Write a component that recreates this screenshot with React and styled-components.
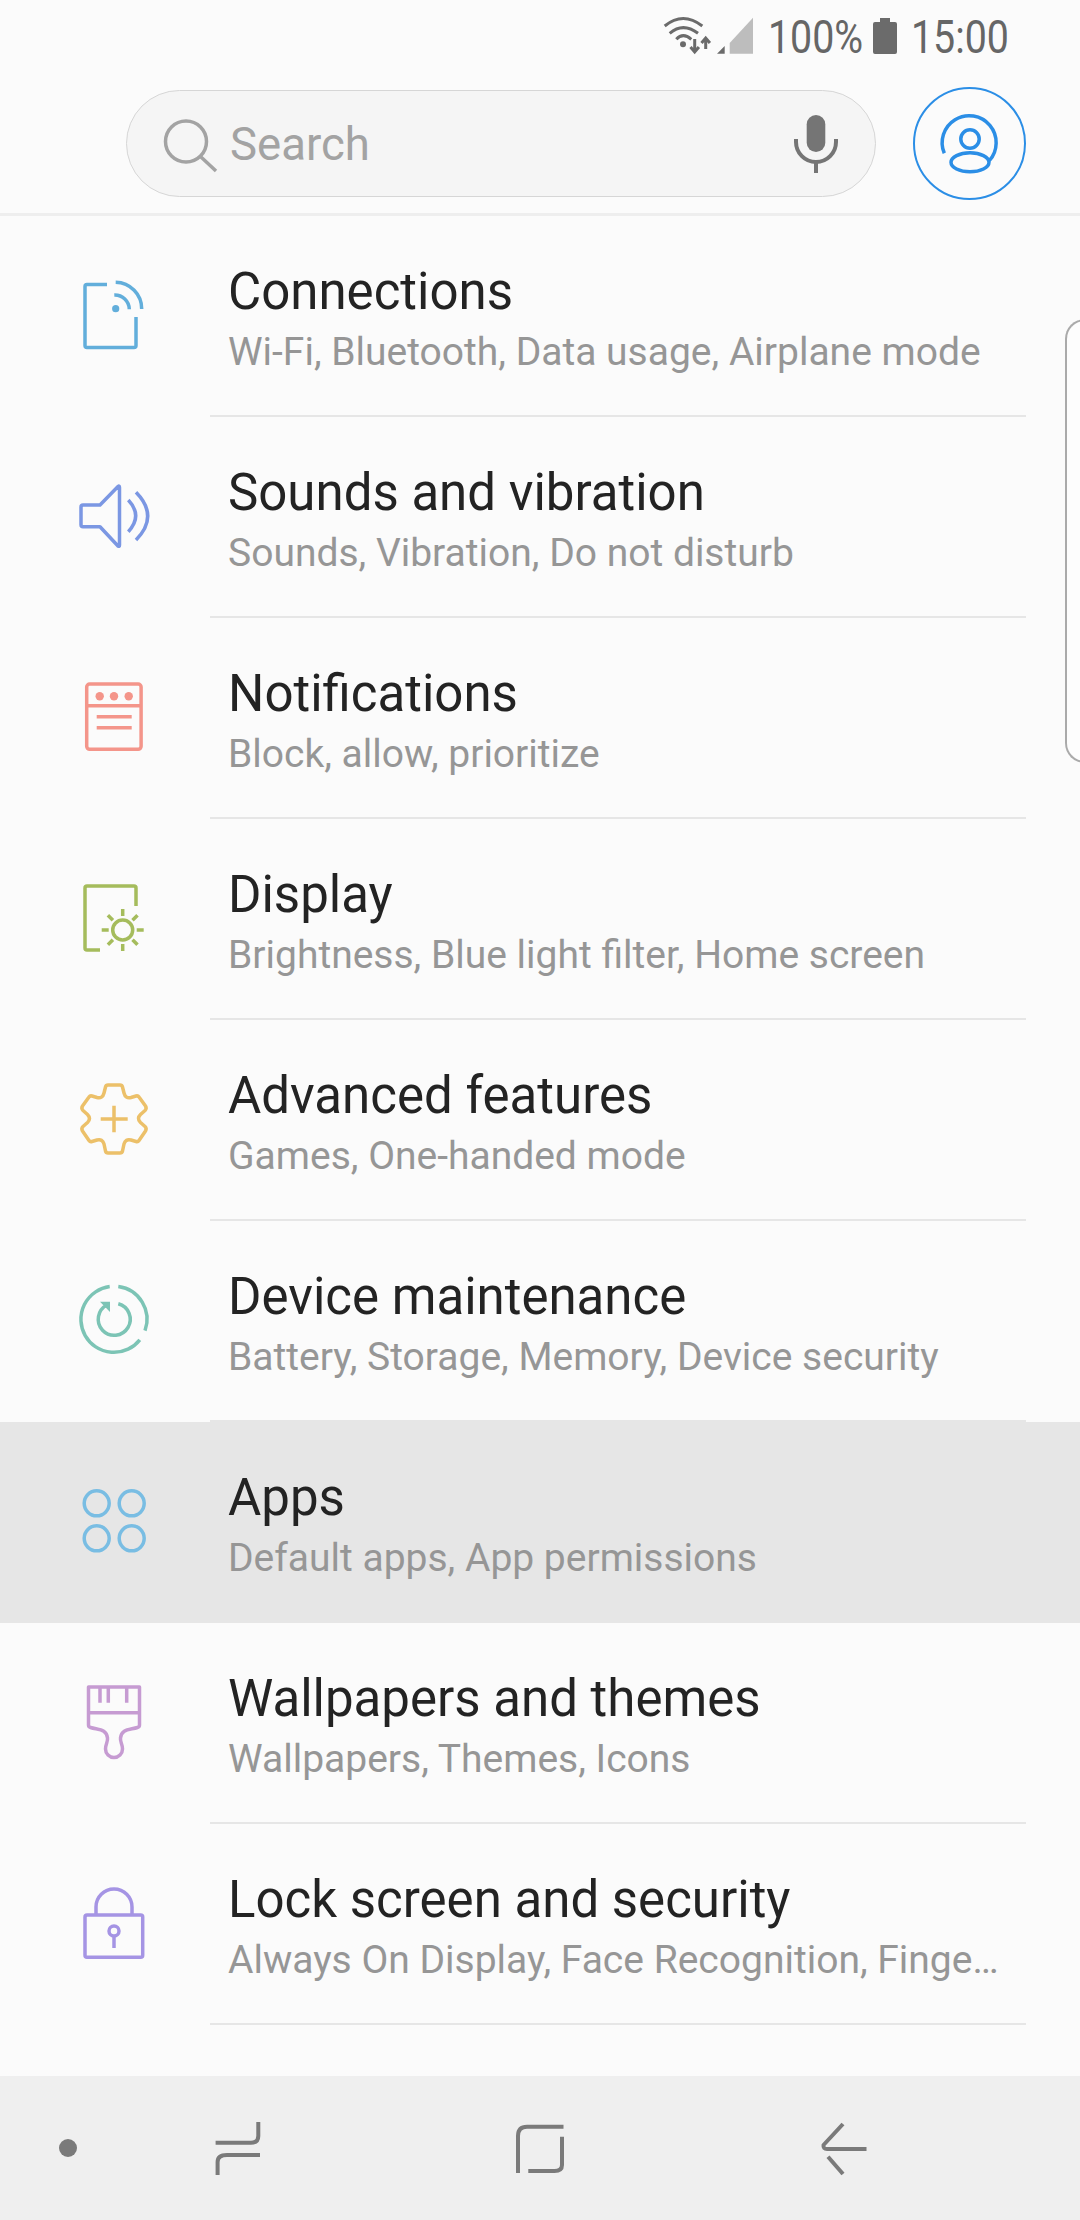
import styled, { createGlobalStyle } from 'styled-components';

const GlobalStyle = createGlobalStyle`
  html, body { margin: 0; padding: 0; background: #fbfbfb; }
  body { font-family: Roboto, "Liberation Sans", sans-serif; }
  * { box-sizing: border-box; }
`;

const Screen = styled.div`
  position: relative;
  width: 1080px;
  height: 2220px;
  display: flex;
  flex-direction: column;
  background: #fbfbfb;
  overflow: hidden;
`;
const Header = styled.header`
  height: 216px;
  border-bottom: 3px solid #eeeeee;
`;
const StatusBar = styled.div`
  height: 87px;
  padding: 0 73px 15px 0;
  display: flex;
  justify-content: flex-end;
  align-items: center;
  color: #666666;
`;
const StatusText = styled.span`
  display: inline-block;
  width: ${(p) => p.$width}px;
  margin-left: ${(p) => p.$left}px;
  padding-top: 2px;
  font-size: 46px;
  line-height: 50px;
  white-space: nowrap;
  transform: scaleX(0.855);
  transform-origin: left center;
`;
const BatteryIcon = styled.svg`
  margin-left: 13px;
  display: block;
`;
const SearchRow = styled.div`
  display: flex;
  align-items: center;
  gap: 37px;
  height: 113px;
  padding-left: 126px;
`;
const SearchPill = styled.div`
  width: 750px;
  height: 107px;
  display: flex;
  align-items: center;
  padding: 0 34px 0 31px;
  background: #f5f5f5;
  border: 1.5px solid #d6d6d6;
  border-radius: 54px;
`;
const Placeholder = styled.span`
  flex: 1;
  margin-left: 12px;
  padding-top: 1px;
  font-size: 45.5px;
  color: #a3a3a3;
`;
const ProfileButton = styled.div`
  width: 113px;
  height: 113px;
  display: flex;
  align-items: center;
  justify-content: center;
  border: 2px solid #2b8ee6;
  border-radius: 50%;
`;
const List = styled.main`
  flex: 1;
`;
const Row = styled.div`
  position: relative;
  height: 201px;
  display: flex;
  padding-left: 74px;
  background: ${(p) => (p.$active ? '#e6e6e6' : 'transparent')};
  &::after {
    content: '';
    position: absolute;
    left: 210px;
    right: 54px;
    bottom: 0;
    height: 2px;
    background: #e6e6e6;
  }
`;
const IconSlot = styled.svg`
  flex: none;
  margin-top: 59px;
  fill: none;
  stroke: ${(p) => p.$color};
  stroke-width: 3.5;
  stroke-linecap: butt;
  stroke-linejoin: round;
  circle.dot { fill: ${(p) => p.$color}; stroke: none; }
  polygon { fill: ${(p) => p.$color}; stroke: none; }
`;
const RowText = styled.div`
  min-width: 0;
  margin-left: 74px;
  padding-top: 48px;
`;
const Title = styled.div`
  font-size: 51px;
  line-height: 56px;
  color: #232323;
`;
const Subtitle = styled.div`
  margin-top: 10px;
  font-size: 39px;
  line-height: 44px;
  color: #969696;
  white-space: nowrap;
`;
const EdgeHandle = styled.div`
  position: absolute;
  top: 319px;
  left: 1065px;
  width: 20px;
  height: 444px;
  border: 2px solid #aaaaaa;
  border-right: none;
  border-radius: 20px 0 0 20px;
  background: #fdfdfd;
`;
const NavBar = styled.nav`
  height: 144px;
  display: flex;
  align-items: center;
  padding-left: 59px;
  background: #efefef;
`;
const NavDot = styled.span`
  width: 18px;
  height: 18px;
  border-radius: 50%;
  background: #7a7a7a;
`;
const NavIcon = styled.svg`
  margin-left: ${(p) => p.$left}px;
  fill: none;
  stroke: #7a7a7a;
  stroke-width: 4;
  stroke-linejoin: round;
`;

const Ic = ({ color, children }) => (
  <IconSlot $color={color} width="80" height="80" viewBox="0 0 80 80">
    {children}
  </IconSlot>
);

const rows = [
  {
    title: 'Connections',
    sub: 'Wi-Fi, Bluetooth, Data usage, Airplane mode',
    icon: (
      <Ic color="#62aedb">
        <path d="M33 9.5H13a2 2 0 0 0-2 2v59a2 2 0 0 0 2 2h47a2 2 0 0 0 2-2V42" />
        <circle className="dot" cx="41.7" cy="33.7" r="3.6" />
        <path d="M40.3 20a14.5 14.5 0 0 1 15 14.3" />
        <path d="M41.7 7.3a26.5 26.5 0 0 1 26 26.7" />
      </Ic>
    ),
  },
  {
    title: 'Sounds and vibration',
    sub: 'Sounds, Vibration, Do not disturb',
    icon: (
      <Ic color="#7b97e3">
        <path d="M26 29L44 10.5q1.5-1.2 1.5 1V69q0 2-1.5 1L26 50.7H9a2 2 0 0 1-2-2V31a2 2 0 0 1 2-2Z" />
        <path d="M54.3 24q14.8 15.8 0 31.7" />
        <path d="M62 16.3q23.4 23.8 0 47.7" />
      </Ic>
    ),
  },
  {
    title: 'Notifications',
    sub: 'Block, allow, prioritize',
    icon: (
      <Ic color="#f4958a">
        <rect x="12.7" y="7" width="54.4" height="65.3" rx="3" />
        <path d="M12.7 28.7H67M22.7 39.7H57.7M22.7 50.7H57.7" />
        <circle className="dot" cx="25.7" cy="19.3" r="4.2" />
        <circle className="dot" cx="40" cy="19.3" r="4.2" />
        <circle className="dot" cx="54.7" cy="19.3" r="4.2" />
      </Ic>
    ),
  },
  {
    title: 'Display',
    sub: 'Brightness, Blue light filter, Home screen',
    icon: (
      <Ic color="#a5bc5c">
        <path d="M62 28V10a2 2 0 0 0-2-2H13a2 2 0 0 0-2 2v60a2 2 0 0 0 2 2h13" />
        <circle cx="48.7" cy="52" r="10" />
        <path d="M48.7 31v7M48.7 66v7M27.7 52h7M62.7 52h7M33.9 37.2l5 5M58.5 61.8l5 5M63.5 37.2l-5 5M38.9 61.8l-5 5" />
      </Ic>
    ),
  },
  {
    title: 'Advanced features',
    sub: 'Games, One-handed mode',
    icon: (
      <Ic color="#ecc069">
        <path d="M34 6H46Q48 6 48.5 8L50 14Q51.5 20 57 18.5L62 17Q64 16.5 65 18L71.5 27Q73 29.5 71 31.5L66.5 35.5Q62.5 39.5 66.5 43.5L71 47.5Q73 49.5 71.5 52L65 61.5Q64 63 62 62.5L57 61Q51.5 59.5 50 65L48.5 72Q48 74 46 74H34Q32 74 31.5 72L30 65Q28.5 59.5 23 61L18 62.5Q16 63 15 61.5L8.5 52Q7 49.5 9 47.5L13.5 43.5Q17.5 39.5 13.5 35.5L9 31.5Q7 29.5 8.5 27L15 18Q16 16.5 18 17L23 18.5Q28.5 20 30 14L31.5 8Q32 6 34 6Z" />
        <path d="M26.7 40H53.7M40 26.7V53.3" />
      </Ic>
    ),
  },
  {
    title: 'Device maintenance',
    sub: 'Battery, Storage, Memory, Device security',
    icon: (
      <Ic color="#7cc4b5">
        <path d="M44.3 6.6A33 33 0 0 1 71 50.6" />
        <path d="M65.8 59.8A33 33 0 1 1 35.7 6.6" />
        <path d="M44.3 23.8A16 16 0 1 1 33 25" />
        <polygon points="26,21.7 36,21.7 36,32" />
      </Ic>
    ),
  },
  {
    title: 'Apps',
    sub: 'Default apps, App permissions',
    active: true,
    icon: (
      <Ic color="#79bde3">
        <circle cx="22.7" cy="22.3" r="12.5" />
        <circle cx="57.7" cy="22.3" r="12.5" />
        <circle cx="22.7" cy="57.3" r="12.5" />
        <circle cx="57.7" cy="57.3" r="12.5" />
      </Ic>
    ),
  },
  {
    title: 'Wallpapers and themes',
    sub: 'Wallpapers, Themes, Icons',
    icon: (
      <Ic color="#c69bd2">
        <path d="M14.5 5H65.5V43Q65.5 45 63.5 45.5C55 48 47.5 47 46.5 56C46 60 48.5 62 48.5 67A8.5 8.5 0 0 1 31.5 67C31.5 62 34 60 33.5 56C32.5 47 25 48 16.5 45.5Q14.5 45 14.5 43Z" />
        <path d="M14.5 30.7H65.5M26 5V20.7M34.3 5V20.7M52.7 5V20.7" />
      </Ic>
    ),
  },
  {
    title: 'Lock screen and security',
    sub: 'Always On Display, Face Recognition, Finge…',
    icon: (
      <Ic color="#a594e4">
        <rect x="11" y="32" width="57.7" height="42.3" rx="2" />
        <path d="M22 32V24a18 18 0 0 1 36 0V32" />
        <circle cx="40" cy="48" r="5" />
        <path d="M40 53V65" />
      </Ic>
    ),
  },
];

export default function App() {
  return (
    <Screen>
      <GlobalStyle />
      <Header>
        <StatusBar>
          <svg width="90" height="40" viewBox="0 0 90 40" fill="none" stroke="#6b6b6b" strokeWidth="3">
            <path d="M1.7 10Q20-5 39.3 10" />
            <path d="M6.7 17.3Q20 6 35 17.3" />
            <path d="M13.3 23.3Q20 16 28.3 23.3" />
            <circle cx="20" cy="28.3" r="3" fill="#6b6b6b" stroke="none" />
            <path d="M31.7 23V35M27.5 31l4.2 5 4.2-5M42.7 33V23M38.5 27l4.2-5 4.2 5" />
            <polygon points="54,37.7 61.7,30 61.7,37.7" fill="#6b6b6b" stroke="none" />
            <polygon points="66.7,37.7 66.7,27 90,1.7 90,37.7" fill="#bdbdbd" stroke="none" />
          </svg>
          <StatusText $left={15} $width={92}>100%</StatusText>
          <BatteryIcon width="24" height="36" viewBox="0 0 24 36">
            <path d="M7 0h10v4h5a2 2 0 0 1 2 2v28a2 2 0 0 1-2 2H2a2 2 0 0 1-2-2V6a2 2 0 0 1 2-2h5Z" fill="#6b6b6b" />
          </BatteryIcon>
          <StatusText $left={14} $width={96}>15:00</StatusText>
        </StatusBar>
        <SearchRow>
          <SearchPill>
            <svg width="60" height="60" viewBox="0 0 60 60" fill="none" stroke="#a3a3a3" strokeWidth="3.5">
              <circle cx="28" cy="27.5" r="20.5" />
              <path d="M43 43L58 57" />
            </svg>
            <Placeholder>Search</Placeholder>
            <svg width="50" height="64" viewBox="0 0 50 64" fill="none" stroke="#757575" strokeWidth="4">
              <rect x="15.7" y="3" width="18.6" height="37" rx="9.3" fill="#757575" stroke="none" />
              <path d="M5 27v3a20 20 0 0 0 40 0v-3" />
              <path d="M25 50V61" />
            </svg>
          </SearchPill>
          <ProfileButton>
            <svg width="70" height="70" viewBox="0 0 70 70" fill="none" stroke="#2b8ee6" strokeWidth="3.5">
              <path d="M9.3 44.3A27 27 0 1 1 54.3 51.7" />
              <circle cx="35" cy="30" r="9.2" />
              <ellipse cx="35" cy="53.3" rx="19" ry="9.5" />
            </svg>
          </ProfileButton>
        </SearchRow>
      </Header>
      <List>
        {rows.map((r) => (
          <Row key={r.title} $active={r.active}>
            {r.icon}
            <RowText>
              <Title>{r.title}</Title>
              <Subtitle>{r.sub}</Subtitle>
            </RowText>
          </Row>
        ))}
      </List>
      <EdgeHandle />
      <NavBar>
        <NavDot />
        <NavIcon $left={131} width="60" height="60" viewBox="0 0 60 60">
          <path d="M50.3 4V18Q50.3 24.7 43 24.7H7.6" />
          <path d="M52 37H19Q9.6 37 9.6 44V57" />
        </NavIcon>
        <NavIcon $left={242} width="60" height="60" viewBox="0 0 60 60">
          <path d="M53.5 8.7H17Q8 8.7 8 18V55" />
          <path d="M52 18.7V47Q52 53 44.5 53H18.3" />
        </NavIcon>
        <NavIcon $left={245} width="60" height="60" viewBox="0 0 60 60">
          <path d="M28 6L8.5 27Q8 31 12 31H51.5" />
          <path d="M13 38.7L28 56" />
        </NavIcon>
      </NavBar>
    </Screen>
  );
}
